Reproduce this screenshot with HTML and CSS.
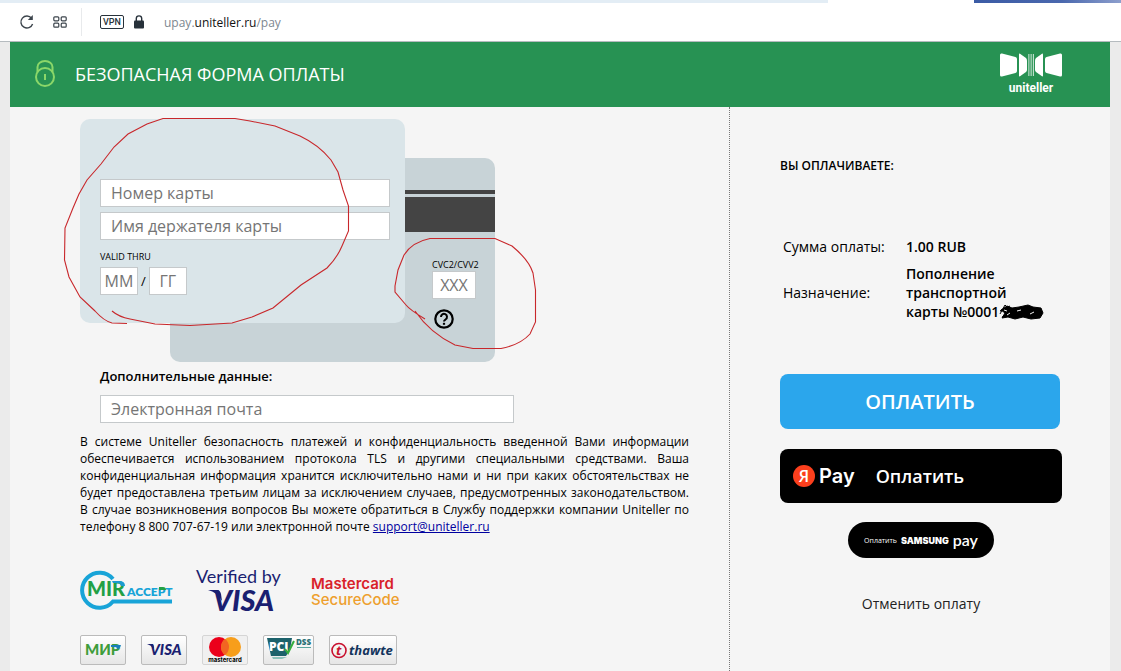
FILE: index.html
```html
<!DOCTYPE html>
<html lang="ru">
<head>
    <meta charset="UTF-8">
    <meta name="viewport" content="width=device-width, initial-scale=1.0">
    <title>Безопасная форма оплаты</title>
    <link rel="stylesheet" href="styles.css">
</head>
<body>
    <div class="tabs">
        <span class="tab-active"></span>
        <span class="tab-photo"></span>
    </div>
    <div class="toolbar">
        <button type="button" class="tool reload" aria-label="Обновить">
            <svg width="16" height="16" viewBox="0 0 16 16" fill="none" stroke="#3c444c" stroke-width="1.4"><path d="M13.6 10A6 6 0 1 1 12.6 4.2"/><path d="M13.8 1v5H8.8z" fill="#3c444c" stroke="none"/></svg>
        </button>
        <button type="button" class="tool" aria-label="Экспресс-панель">
            <svg width="14" height="12" viewBox="0 0 14 12" fill="none" stroke="#3c444c" stroke-width="1.2"><rect x=".8" y=".8" width="5" height="4" rx="1"/><rect x="8.2" y=".8" width="5" height="4" rx="1"/><rect x=".8" y="7.2" width="5" height="4" rx="1"/><rect x="8.2" y="7.2" width="5" height="4" rx="1"/></svg>
        </button>
        <span class="separator"></span>
        <span class="vpn">VPN</span>
        <svg class="lock" width="12" height="14" viewBox="0 0 12 14"><rect x="1" y="5.5" width="10" height="8" rx="1" fill="#27313a"/><path d="M3.3 6V3.6a2.7 2.7 0 0 1 5.4 0V6" fill="none" stroke="#27313a" stroke-width="1.4"/></svg>
        <span class="url">upay.<b>uniteller.ru</b>/pay</span>
    </div>

    <div class="page">
        <header class="header">
            <svg width="22" height="28" viewBox="0 0 22 28" fill="none" stroke="#8bd769" stroke-width="2"><circle cx="11" cy="17" r="9"/><path d="M3.500 12V7a7.500 6 0 0 1 15 0V12"/><path d="M11 14v6"/></svg>
            <h1>БЕЗОПАСНАЯ ФОРМА ОПЛАТЫ</h1>
            <svg class="brand" width="62" height="44" viewBox="0 0 62 44" fill="#fff">
                <path d="M2 .5L15.500 4Q17 4.500 17 6V18Q17 19.500 15.500 20L2 23.500Q0 24 0 22V2Q0 0 2 .5z"/>
                <path d="M20 .7L26 5Q27 6 27 7.500V16.500Q27 18 26 19L20 23.300Q19 23.800 19 22.500V1.500Q19 .3 20 .7z"/>
                <path d="M42 .7L36 5Q35 6 35 7.500V16.500Q35 18 36 19L42 23.300Q43 23.800 43 22.500V1.500Q43 .3 42 .7z"/>
                <path d="M60 .5L46.500 4Q45 4.500 45 6V18Q45 19.500 46.500 20L60 23.500Q62 24 62 22V2Q62 0 60 .5z"/>
                <path d="M28.500 1h.8v22h-.8zM30.700 1h.8v22h-.8zM32.900 1h.8v22h-.8z"/>
                <text x="31" y="39" text-anchor="middle" class="brand-name">uniteller</text>
            </svg>
        </header>

        <main class="content">
            <form class="payment" id="payment">
                <div class="cards">
                    <div class="card card-back">
                        <div class="stripe stripe-thin"></div>
                        <div class="stripe"></div>
                        <div class="cvc">
                            <label for="cvc">CVC2/CVV2</label>
                            <input type="text" id="cvc" placeholder="XXX">
                            <button type="button" class="help" aria-label="Что такое CVC2/CVV2">
                                <svg width="20" height="20" viewBox="0 0 20 20" fill="none" stroke="#000" stroke-width="2.200"><circle cx="10" cy="10" r="8.700"/><path d="M7 8a3 3 0 1 1 4.700 2.300Q10 11.300 10 12.500" stroke-width="2"/><path d="M10 13.800v2"/></svg>
                            </button>
                        </div>
                    </div>
                    <div class="card card-front">
                        <input type="text" aria-label="Номер карты" placeholder="Номер карты">
                        <input type="text" aria-label="Имя держателя карты" placeholder="Имя держателя карты">
                        <label for="month">VALID THRU</label>
                        <div class="expiry">
                            <input type="text" id="month" placeholder="ММ">
                            <span>/</span>
                            <input type="text" aria-label="Год" placeholder="ГГ">
                        </div>
                    </div>
                    <svg class="marks" width="480" height="240" viewBox="60 115 480 240" fill="none" stroke="#c8272b" stroke-width="1.1">
                        <path d="M112 311Q119 317 130 319L155 324L190 325.500L232 323L252 317L273 308L301 285L327 268Q337 258 342 246L348.500 231V206L343 190L338 172L331 160Q319 145 300 136L275 126L250 121L235 118.500H163L147 124L128 134L114 147L101 164L87 180L79 194L73 208L65 228L64.500 260L69 277L80 297L95 311Q104 321 112 323L127 323.500"/>
                        <path d="M425 319Q410 310 406 305L395 292V286L398 270L404 255Q412 242 430 238.500H495L512 246Q529 260 533 273L535.500 290V322L530 334Q520 345 501 348.500H473L455 345Q430 333 415 311"/>
                    </svg>
                </div>

                <div class="extra">
                    <label for="email">Дополнительные данные:</label>
                    <input type="email" id="email" placeholder="Электронная почта">
                </div>

                <p class="notice">В системе Uniteller безопасность платежей и конфиденциальность введенной Вами информации обеспечивается использованием протокола TLS и другими специальными средствами. Ваша конфиденциальная информация хранится исключительно нами и ни при каких обстоятельствах не будет предоставлена третьим лицам за исключением случаев, предусмотренных законодательством. В случае возникновения вопросов Вы можете обратиться в Службу поддержки компании Uniteller по телефону 8 800 707-67-19 или электронной почте <a href="mailto:support@uniteller.ru">support@uniteller.ru</a></p>

                <div class="programs">
                    <svg width="95" height="40" viewBox="0 0 95 40">
                        <path d="M33 9A17.500 17.500 0 1 0 33 31.500H92" fill="none" stroke="#18a4d8" stroke-width="4"/>
                        <text x="7" y="26" class="mir-word" fill="#22a045">MIR</text>
                        <path d="M32 11h7q6 0 6 5h-4q-1-3-4-3h-4z" fill="#1b9bd0"/>
                        <text x="47" y="26" class="accept" fill="#18a4d8">ACCEPT</text>
                        <path d="M79 17h4q3 0 3 3h-7z" fill="#22a045"/>
                    </svg>
                    <svg width="86" height="46" viewBox="0 0 86 46" fill="#1a1f71">
                        <text x="0" y="16" class="verified">Verified by</text>
                        <text x="17" y="44" class="visa-large">VISA</text>
                        <path d="M12 23h9q3 0 4 4l1 7Q21 25 12 23z"/>
                    </svg>
                    <svg width="91" height="34" viewBox="0 0 91 34">
                        <text x="0" y="16" class="mc-program" fill="#d9222a">Mastercard</text>
                        <text x="0" y="32" class="mc-code" fill="#ee9f2d">SecureCode</text>
                    </svg>
                </div>

                <div class="badges">
                    <span class="badge"><svg width="44" height="28" viewBox="0 0 44 28"><text x="4" y="19" class="mir-small" fill="#3f9d3b">МИР</text><path d="M30 9h10q-1 4-4 4 0-2-2-2h-4z" fill="#1a7fbd"/></svg></span>
                    <span class="badge"><svg width="44" height="28" viewBox="0 0 44 28" fill="#1a1f71"><text x="8" y="19" class="visa-small">VISA</text><path d="M5 8h5q2 0 2 5Q9 9 5 8z"/></svg></span>
                    <span class="badge badge-plain"><svg width="44" height="28" viewBox="0 0 44 28"><circle cx="16" cy="11" r="10" fill="#eb001b"/><circle cx="28" cy="11" r="10" fill="#f79e1b"/><path d="M22 3a10 10 0 0 1 0 16 10 10 0 0 1 0-16z" fill="#f26522"/><text x="22" y="26" text-anchor="middle" class="mc-small">mastercard</text></svg></span>
                    <span class="badge"><svg width="49" height="28" viewBox="0 0 49 28"><path d="M3 2h25l-2 12-4 6H7z" fill="#1c626b"/><text x="5" y="15" class="pci" fill="#fff">PCI</text><path d="M21 13l3 4 6-12" fill="none" stroke="#35ae3e" stroke-width="2"/><text x="32" y="9" class="dss" fill="#2b7076">DSS</text><path d="M33 11.500h14" stroke="#5ba6a0" stroke-width="1"/><path d="M8 21h15l-5 2h-9z" fill="#8cc3bb"/></svg></span>
                    <span class="badge"><svg width="66" height="28" viewBox="0 0 66 28"><circle cx="9" cy="14.500" r="7" fill="none" stroke="#c8102e" stroke-width="1.600"/><text x="6" y="19" class="thawte" fill="#c8102e">t</text><text x="19" y="19" class="thawte" fill="#13345c">thawte</text></svg></span>
                </div>
            </form>

            <aside class="summary">
                <h2>ВЫ ОПЛАЧИВАЕТЕ:</h2>
                <table>
                    <tr>
                        <th scope="row">Сумма оплаты:</th>
                        <td>1.00 RUB</td>
                    </tr>
                    <tr>
                        <th scope="row">Назначение:</th>
                        <td>Пополнение транспортной карты №0001<svg class="redacted" width="45" height="16" viewBox="0 0 45 16" fill="#000" stroke="#000"><path d="M2 6l6-4 5 2 7-1 9-2 5 2 8 1 2 5-3 5-9 1-8-2-8 2-7-2-6 1 3-5z"/><path d="M1 10L6 1l3 3-8 3 10-5M3 13l8-3" fill="none"/><path d="M5 6l3 1M8 11l3-2M18 7l4-1M31 10l4-2" stroke="#f5f5f5"/></svg></td>
                    </tr>
                </table>
                <button type="submit" form="payment" class="pay">ОПЛАТИТЬ</button>
                <button type="button" class="yandex-pay">
                    <span class="ya">Я</span>
                    <span class="ya-name">Pay</span>
                    <span>Оплатить</span>
                </button>
                <button type="button" class="samsung-pay">
                    <small>Оплатить</small>
                    <b>SAMSUNG</b>
                    <span>pay</span>
                </button>
                <a href="#" class="cancel">Отменить оплату</a>
            </aside>
        </main>
    </div>
</body>
</html>
```
FILE: styles.css
```css
* {
    box-sizing: border-box;
}
body {
    margin: 0;
    min-height: 100vh;
    display: flex;
    flex-direction: column;
    font-family: "Open Sans", "Noto Sans", sans-serif;
    background-color: #ebebeb;
    color: #000;
}
button, input {
    font-family: inherit;
}
button {
    border: none;
    padding: 0;
    cursor: pointer;
}

/* browser bar */
.tabs {
    display: flex;
    justify-content: flex-end;
    height: 3px;
    background-color: #e3edf5;
}
.tab-active {
    width: 146px;
    background-color: #fff;
}
.tab-photo {
    width: 147px;
    background: linear-gradient(to right, #3b5ba5, #4a68ae 60%, #8d9fcd);
}
.toolbar {
    display: flex;
    align-items: center;
    height: 39px;
    padding-left: 19px;
    background-color: #fff;
    border-bottom: 1px solid #b5bbbf;
}
.tool {
    display: flex;
    background: none;
}
.reload {
    margin-right: 18px;
}
.separator {
    width: 1px;
    height: 28px;
    margin: 0 18px 0 14px;
    background-color: #e8eaec;
}
.vpn {
    width: 24px;
    height: 14px;
    border: 1px solid #27313a;
    border-radius: 2px;
    font: 500 9px/12px Roboto, sans-serif;
    text-align: center;
    color: #27313a;
}
.lock {
    margin: 0 19px 0 9px;
}
.url {
    font-size: 12px;
    color: #7d8790;
}
.url b {
    font-weight: 400;
    color: #111;
}

.page {
    flex: 1;
    display: flex;
    flex-direction: column;
    margin: 0 11px 0 10px;
    background-color: #f5f5f5;
}
.header {
    display: flex;
    align-items: center;
    height: 65px;
    padding: 0 48px 2px 24px;
    background-color: #279253;
}
.header h1 {
    margin: 0 auto 0 19px;
    font-size: 18px;
    font-weight: 400;
    line-height: 24px;
    color: #fff;
}
.brand {
    margin-top: 2px;
}
.brand-name {
    font: 700 12px Roboto, sans-serif;
}

.content {
    flex: 1;
    display: grid;
    grid-template-columns: 719px 1fr;
}
.payment {
    padding: 12px 40px 0 70px;
}

/* card form */
.cards {
    display: grid;
    position: relative;
}
.card {
    grid-area: 1 / 1;
    width: 325px;
    height: 204px;
    border-radius: 10px;
}
.card-back {
    margin: 39px 0 0 90px;
    padding-top: 32px;
    background-color: #c8d3d7;
}
.card-front {
    display: flex;
    flex-direction: column;
    padding: 60px 15px 0 20px;
    background-color: #dae5e9;
}
.stripe {
    height: 35px;
    background-color: #444;
}
.stripe-thin {
    height: 4px;
    margin-bottom: 3px;
}
.cvc {
    display: flex;
    flex-direction: column;
    align-items: flex-start;
    padding: 27px 0 0 262px;
}
.cards label {
    font-size: 9px;
    line-height: 12px;
}
.payment input {
    height: 28px;
    padding: 0 10px;
    border: 1px solid #c5c9cb;
    background-color: #fff;
    font-size: 16px;
}
.payment input::placeholder {
    color: #757575;
    opacity: 1;
}
.card-front > input {
    margin-bottom: 5px;
}
.card-front label {
    margin: 6px 0 4px;
}
.expiry {
    display: flex;
    align-items: center;
    gap: 3px;
    font-size: 13px;
}
.payment .expiry input {
    width: 38px;
    padding: 0;
    text-align: center;
}
.payment .cvc input {
    width: 44px;
    padding: 0;
    text-align: center;
}
.help {
    display: flex;
    margin: 10px 0 0 2px;
    background: none;
}
.marks {
    position: absolute;
    top: -4px;
    left: -20px;
    pointer-events: none;
}

.extra {
    display: flex;
    flex-direction: column;
    padding: 4px 20px 0;
}
.extra label {
    margin-bottom: 9px;
    font-size: 13px;
    font-weight: 600;
    line-height: 20px;
}
.extra input {
    width: 414px;
}
.notice {
    margin: 10px 0 0;
    font-size: 12px;
    line-height: 17px;
    text-align: justify;
}
.notice a {
    color: #0000a0;
}

/* logos */
.programs {
    display: flex;
    align-items: center;
    gap: 21px;
    margin-top: 32px;
}
.programs svg {
    overflow: visible;
}
.programs svg:last-child {
    margin-left: 8px;
}
.mir-word {
    font: 900 20px Lato, sans-serif;
}
.accept {
    font: 800 12px Lato, sans-serif;
}
.verified {
    font: 400 18px Lato, sans-serif;
}
.visa-large {
    font: italic 900 29px Lato, sans-serif;
}
.mc-program {
    font: 600 15px Inter, sans-serif;
}
.mc-code {
    font: 500 15px Inter, sans-serif;
}
.badges {
    display: flex;
    gap: 15px;
    margin-top: 22px;
}
.badge {
    display: flex;
    border: 1px solid #bbb;
    border-radius: 2px;
    background: linear-gradient(#fff, #e6e6e6);
}
.badge-plain {
    background: #f0f0f0;
    border-color: #d5d5d5;
}
.mir-small {
    font: 900 15px Lato, sans-serif;
}
.visa-small {
    font: italic 900 15px Lato, sans-serif;
}
.mc-small {
    font: 700 6px Inter, sans-serif;
}
.pci {
    font: 800 12px "Open Sans", sans-serif;
}
.dss {
    font: 800 8px "Open Sans", sans-serif;
}
.thawte {
    font: italic 700 13px "Open Sans", sans-serif;
}

/* right column */
.summary {
    display: flex;
    flex-direction: column;
    padding: 50px 48px 0 50px;
    border-left: 1px dotted #777;
}
.summary h2 {
    margin: 0 0 58px;
    font-size: 12px;
    font-weight: 600;
    line-height: 18px;
}
.summary table {
    width: 270px;
    margin-bottom: 47px;
    border-spacing: 0 2px;
    font-size: 14px;
    line-height: 19px;
}
.summary th, .summary td {
    padding: 2px 0 4px 3px;
    text-align: left;
}
.summary th {
    width: 123px;
    font-weight: 400;
}
.summary td {
    font-weight: 600;
}
.redacted {
    margin-right: -20px;
    vertical-align: -3px;
}
.pay {
    width: 280px;
    height: 55px;
    margin-bottom: 20px;
    border-radius: 8px;
    background-color: #2ba6ec;
    color: #fff;
    font-size: 20px;
    font-weight: 600;
}
.yandex-pay {
    display: flex;
    align-items: center;
    width: 282px;
    height: 54px;
    padding-left: 13px;
    border-radius: 8px;
    background-color: #000;
    color: #fff;
    font-size: 18px;
    font-weight: 600;
}
.ya {
    width: 22px;
    height: 22px;
    border-radius: 50%;
    background-color: #fc3f1d;
    font-size: 16px;
    line-height: 22px;
    text-align: center;
}
.ya-name {
    margin: 0 21px 0 4px;
    font: 600 20px Inter, sans-serif;
}
.samsung-pay {
    display: flex;
    align-items: center;
    justify-content: center;
    align-self: center;
    gap: 4px;
    width: 146px;
    height: 36px;
    margin-top: 19px;
    border-radius: 18px;
    background-color: #000;
    color: #fff;
}
.samsung-pay small {
    font-size: 7px;
}
.samsung-pay b {
    font: 900 9px Inter, sans-serif;
}
.samsung-pay span {
    font: 600 16px/16px Lato, sans-serif;
}
.cancel {
    align-self: center;
    margin-top: 36px;
    font-size: 14px;
    line-height: 20px;
    color: #222;
    text-decoration: none;
}
```
